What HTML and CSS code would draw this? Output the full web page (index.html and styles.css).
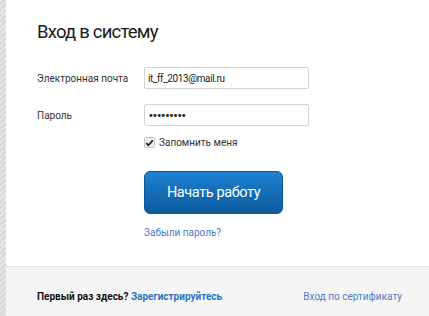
FILE: index.html
```html
<!DOCTYPE html>
<html lang="ru">
<head>
    <meta charset="UTF-8">
    <title>Вход в систему</title>
    <link rel="stylesheet" href="styles.css">
</head>
<body>
    <div class="stripe"></div>
    <div class="page">
        <!-- Форма входа -->
        <div class="login">
            <h1>Вход в систему</h1>
            <div class="row row-email">
                <label for="email">Электронная почта</label>
                <input type="text" id="email" value="it_ff_2013@mail.ru">
            </div>
            <div class="row row-pass">
                <label for="pass">Пароль</label>
                <input type="password" id="pass" value="123456789">
            </div>
            <div class="row remember">
                <label class="check">
                    <span class="box">
                        <svg width="9" height="8" viewBox="0 0 9 8"><path d="M1.2 4.2 L3.4 6.3 L7.8 1.3" fill="none" stroke="#222" stroke-width="1.8"/></svg>
                    </span>
                    Запомнить меня
                </label>
            </div>
            <div class="row row-btn">
                <button type="button" class="start">Начать работу</button>
            </div>
            <div class="row">
                <a href="#" class="forgot">Забыли пароль?</a>
            </div>
        </div>

        <!-- Подвал -->
        <div class="footer">
            <div class="first"><b>Первый раз здесь?</b> <a href="#" class="reg">Зарегистрируйтесь</a></div>
            <a href="#" class="cert">Вход по сертификату</a>
        </div>
    </div>
</body>
</html>
```

FILE: styles.css
```css
/* Базовые стили */
body {
    margin: 0;
    display: flex;
    height: 316px;
    font-family: Roboto, "Open Sans", Arial, sans-serif;
    color: #222;
    background: #fff;
    overflow: hidden;
}

.stripe {
    width: 6px;
    background: repeating-linear-gradient(135deg, #e4e4e4 0 2px, #d9d9d9 2px 4px);
}

.page {
    flex: 1;
    display: flex;
    flex-direction: column;
}

/* Форма */
.login {
    padding: 19px 0 0 31px;
    height: 266px;
    box-sizing: border-box;
}

h1 {
    margin: 0 0 22px;
    font-weight: normal;
    font-size: 18.5px;
    letter-spacing: -0.8px;
    line-height: 26px;
    color: #1a1a1a;
}

.row {
    display: flex;
    align-items: center;
    padding-left: 107px;
    position: relative;
}

.row-email {
    margin-bottom: 15px;
}

.row-pass {
    margin-bottom: 9px;
}

.remember {
    margin-bottom: 21px;
}

.row-btn {
    margin-bottom: 11px;
}

.row label {
    position: absolute;
    left: 0;
    font-size: 10px;
    color: #333;
}

.row input[type="text"],
.row input[type="password"] {
    width: 165px;
    height: 22px;
    box-sizing: border-box;
    border: 1px solid #d4d4d4;
    border-radius: 2px;
    padding: 0 3px;
    font-family: inherit;
    font-size: 10px;
    letter-spacing: -0.4px;
    color: #222;
}

.row input[type="password"] {
    font-family: "DejaVu Sans", sans-serif;
    font-size: 10px;
    letter-spacing: -1.8px;
}

.row label.check {
    position: static;
    display: flex;
    align-items: center;
    gap: 4px;
    height: 15px;
}

.box {
    display: flex;
    align-items: center;
    justify-content: center;
    width: 9px;
    height: 9px;
    border: 1px solid #c8c8c8;
    border-radius: 2px;
    background: #eee;
}

button.start {
    width: 139px;
    height: 43px;
    border: 1px solid #0d5794;
    border-radius: 6px;
    background: linear-gradient(#1d82d1, #0c5a9c);
    color: #fff;
    font-family: inherit;
    font-size: 14.5px;
    letter-spacing: -0.4px;
    cursor: pointer;
}

.forgot {
    font-size: 10px;
    line-height: 15px;
    color: #4a7dc6;
    text-decoration: none;
}

/* Подвал */
.footer {
    flex: 1;
    display: flex;
    align-items: center;
    justify-content: space-between;
    padding: 10px 27px 0 31px;
    background: #f5f5f5;
    border-top: 1px solid #e2e2e2;
    font-size: 10px;
}

.first b {
    color: #111;
}

.reg {
    color: #2f73bf;
    font-weight: bold;
    text-decoration: none;
}

.cert {
    color: #4a7dc6;
    text-decoration: none;
}
```
